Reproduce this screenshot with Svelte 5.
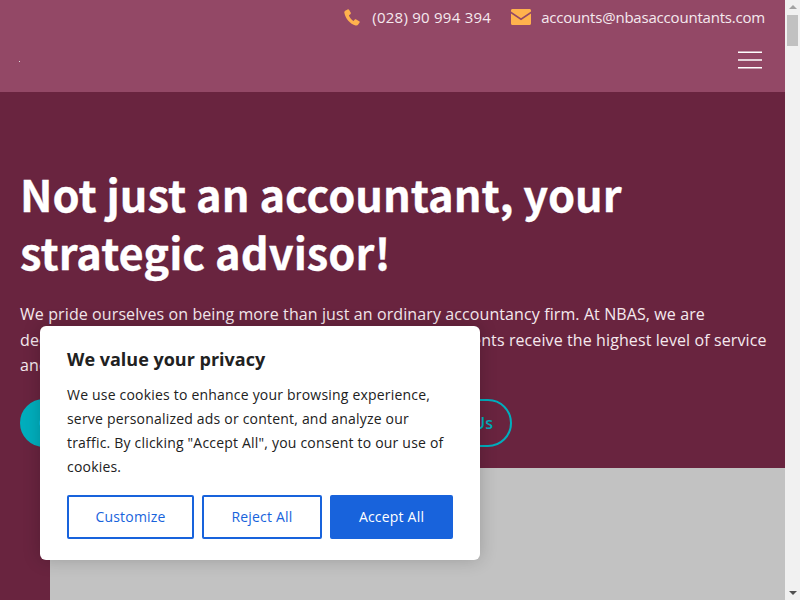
<script>
	const sections = ['Contact Us'];
</script>

<div class="page">
	<main class="site">
		<header class="header">
			<div class="topbar">
				<a class="contact phone" href="#top">
					<svg width="16" height="17" viewBox="0 0 16 17"><path d="M3.6 0.4 L1.2 1.8 C0.4 2.4 0.2 3 0.4 4 C1.4 9.4 6 15 11.6 16.4 C12.8 16.7 13.6 16.4 14.2 15.6 L15.6 13.6 C15.9 13 15.8 12.6 15.2 12.2 L12.2 10.4 C11.7 10.1 11.2 10.2 10.8 10.6 L9.6 11.9 C7.4 10.8 5.6 8.6 4.9 6.2 L6.4 5.2 C6.9 4.8 7 4.4 6.8 3.8 L5.2 0.9 C4.8 0.3 4.2 0.1 3.6 0.4 Z" fill="#ffb24d"/></svg>
					<span>(028) 90 994 394</span>
				</a>
				<a class="contact mail" href="#top">
					<svg width="20" height="16" viewBox="0 0 20 16"><path d="M1.5 0 H18.5 C19.4 0 20 .6 20 1.5 V2.6 L10 9.2 L0 2.6 V1.5 C0 .6 .6 0 1.5 0 Z M0 4.6 L10 11.2 L20 4.6 V14.5 C20 15.4 19.4 16 18.5 16 H1.5 C.6 16 0 15.4 0 14.5 Z" fill="#ffb24d"/></svg>
					<span>accounts@nbasaccountants.com</span>
				</a>
			</div>
			<div class="navbar">
				<span class="logo"></span>
				<button class="burger" aria-label="Menu">
					<svg width="24" height="18" viewBox="0 0 24 18"><path d="M0 1.2 H24 M0 9 H24 M0 16.8 H24" stroke="#fff" stroke-width="1.6" fill="none"/></svg>
				</button>
			</div>
		</header>

		<section class="hero">
			<h1>Not just an accountant, your strategic advisor!</h1>
			<p>We pride ourselves on being more than just an ordinary accountancy firm. At NBAS, we are dedicated to going above and beyond to ensure all of our clients receive the highest level of service and support.</p>
			<div class="actions">
				<a class="btn solid" href="#top">Our Services</a>
				{#each sections as label}
					<a class="btn outline" href="#top">{label}</a>
				{/each}
			</div>
		</section>

		<div class="picture"></div>
	</main>

	<div class="scrollbar">
		<span class="arrow up"></span>
		<span class="thumb"></span>
		<span class="track"></span>
		<span class="arrow down"></span>
	</div>

	<div class="cookie">
		<h2>We value your privacy</h2>
		<p>We use cookies to enhance your browsing experience, serve personalized ads or content, and analyze our traffic. By clicking "Accept All", you consent to our use of cookies.</p>
		<div class="cookie-buttons">
			<button class="customize">Customize</button>
			<button class="reject">Reject All</button>
			<button class="accept">Accept All</button>
		</div>
	</div>
</div>

<style>
	:global(body) {
		margin: 0;
		font-family: 'Open Sans', sans-serif;
	}

	.page {
		position: relative;
		display: flex;
		width: 800px;
		height: 600px;
		overflow: hidden;
		background: #69243f;
	}

	.site {
		flex: 1;
		min-width: 0;
		display: flex;
		flex-direction: column;
	}

	.header {
		height: 92px;
		background: #934866;
		box-sizing: border-box;
		padding: 0 20px;
		flex: none;
	}

	.topbar {
		display: flex;
		justify-content: flex-end;
		gap: 20px;
		height: 34px;
		align-items: center;
	}

	.contact {
		display: flex;
		align-items: center;
		color: #f5e9ee;
		font-size: 15px;
		text-decoration: none;
	}

	.phone {
		gap: 12px;
		letter-spacing: 0.25px;
	}

	.mail {
		gap: 10px;
		letter-spacing: -0.2px;
	}

	.navbar {
		display: flex;
		justify-content: space-between;
		align-items: center;
		height: 52px;
	}

	.logo {
		width: 1px;
		height: 1px;
		background: #ddd;
		margin-left: -1px;
		margin-top: 3px;
	}

	.burger {
		display: block;
		width: 24px;
		height: 18px;
		margin-right: 3px;
		padding: 0;
		background: none;
		border: 0;
	}

	.burger svg {
		display: block;
	}

	.hero {
		height: 376px;
		flex: none;
		box-sizing: border-box;
		padding: 72px 20px 0;
		color: #fff;
	}

	.hero h1 {
		margin: 0;
		font-family: 'Noto Sans CJK SC', sans-serif;
		font-size: 43.4px;
		line-height: 58px;
		font-weight: 700;
		-webkit-text-stroke: 0.3px #fff;
	}

	.hero p {
		margin: 22px -5px 0 0;
		font-size: 16px;
		line-height: 25.6px;
		letter-spacing: 0.1px;
		color: #f5e9ee;
	}

	.actions {
		display: flex;
		gap: 12px;
		margin-top: 20px;
	}

	.btn {
		display: block;
		box-sizing: border-box;
		height: 48px;
		line-height: 44px;
		padding: 0 17px;
		border: 2px solid #00aebd;
		border-radius: 24px;
		font-size: 16px;
		font-weight: 600;
		text-decoration: none;
		width: 240px;
	}

	.btn.solid {
		background: #00aebd;
		color: #fff;
	}

	.btn.outline {
		color: #00aebd;
		text-align: right;
	}

	.picture {
		flex: 1;
		margin-left: 50px;
		background: #c2c2c2;
	}

	.scrollbar {
		flex: none;
		width: 15px;
		display: flex;
		flex-direction: column;
		align-items: center;
		background: #f1f1f1;
	}

	.arrow {
		flex: none;
		width: 0;
		height: 0;
		border-left: 4px solid transparent;
		border-right: 4px solid transparent;
	}

	.arrow.up {
		margin: 5px 0 4px;
		border-bottom: 4px solid #a3a3a3;
	}

	.arrow.down {
		margin: 4px 0 5px;
		border-top: 4px solid #505050;
	}

	.thumb {
		flex: none;
		width: 11px;
		height: 31px;
		background: #c1c1c1;
		margin-top: 2px;
	}

	.track {
		flex: 1;
	}

	.cookie {
		position: absolute;
		left: 40px;
		top: 326px;
		width: 440px;
		height: 234px;
		box-sizing: border-box;
		padding: 21px 27px;
		background: #fff;
		border-radius: 6px;
		box-shadow: 0 0 18px rgba(0, 0, 0, 0.2);
		color: #212121;
	}

	.cookie h2 {
		margin: 0;
		font-size: 18px;
		line-height: 24px;
		font-weight: 700;
	}

	.cookie p {
		margin: 12px 0 0;
		font-size: 14px;
		line-height: 24px;
		letter-spacing: 0.2px;
	}

	.cookie-buttons {
		display: flex;
		gap: 8px;
		margin-top: 16px;
	}

	.cookie-buttons button {
		height: 44px;
		box-sizing: border-box;
		border: 2px solid #1863dc;
		border-radius: 2px;
		background: #fff;
		color: #1863dc;
		font: 500 14px 'Open Sans', sans-serif;
		letter-spacing: 0.2px;
		padding: 0 0 1px;
	}

	.customize {
		width: 127px;
	}

	.reject {
		width: 120px;
	}

	.cookie-buttons .accept {
		width: 123px;
		background: #1863dc;
		color: #fff;
	}
</style>
